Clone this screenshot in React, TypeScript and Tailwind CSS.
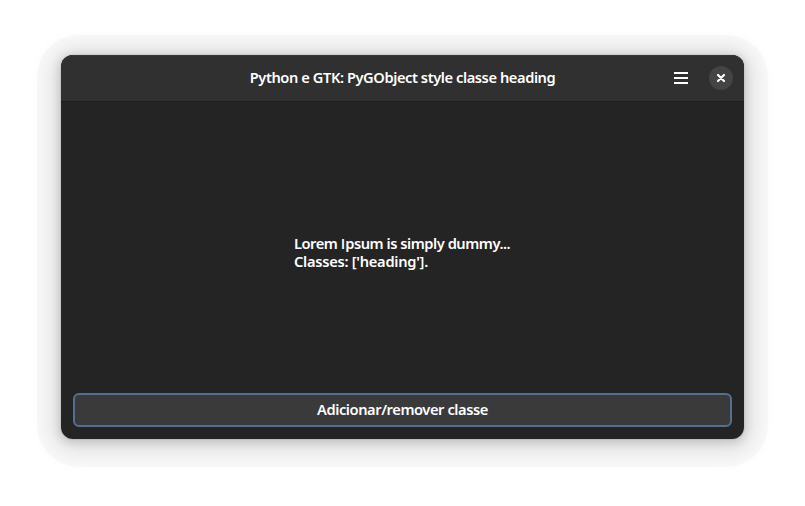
export default function App() {
  return (
    <div className="flex h-[506px] w-[805px] items-start overflow-hidden bg-white px-[61px] pt-[55px] font-['Noto_Sans',sans-serif] text-white">
      <div className="rounded-[18px] shadow-[0_4px_0_24px_rgba(0,0,0,0.025)]">
        <main className="flex h-[384px] w-[683px] flex-col rounded-xl bg-[#242424] shadow-[0_2px_8px_2px_rgba(0,0,0,0.13),0_3px_22px_9px_rgba(0,0,0,0.11),0_0_0_1px_rgba(0,0,0,0.05)]">
          <header className="grid h-[47px] shrink-0 grid-cols-[1fr_auto_1fr] items-center rounded-t-xl border-b border-[#1e1e1e] bg-[#303030] px-[11px] shadow-[inset_0_1px_0_#373737]">
            <span />
            <h1 className="whitespace-nowrap pb-0.5 text-[14.67px] font-semibold leading-5 tracking-[-0.43px]">
              Python e GTK: PyGObject style classe heading
            </h1>
            <div className="flex items-center justify-end gap-5">
              <button aria-label="Menu">
                <svg className="block" width="16" height="16" viewBox="0 0 16 16" fill="white"><path d="M1 2h14v2H1zM1 7h14v2H1zM1 12h14v2H1z" /></svg>
              </button>
              <button aria-label="Fechar" className="flex size-6 items-center justify-center rounded-full bg-[#444]">
                <svg width="16" height="16" viewBox="0 0 16 16" stroke="white" strokeWidth="2.2" strokeLinecap="round"><path d="m5 5 6 6M11 5l-6 6" /></svg>
              </button>
            </div>
          </header>
          <section className="flex flex-1 flex-col p-3">
            <div className="flex flex-1 items-center justify-center pb-[3px]">
              <div className="flex w-[217px] flex-col whitespace-nowrap text-[14.67px] font-semibold leading-[18px]">
                <p className="flex h-[18px] tracking-[-0.47px]">
                  <span className="whitespace-pre">Lorem </span>
                  <span className="mr-[0.5px] font-['Open_Sans',sans-serif]">I</span>
                  <span>psum is simply dummy...</span>
                </p>
                <p className="h-[18px] tracking-[-0.27px]">Classes: ['heading'].</p>
              </div>
            </div>
            <button className="h-[34px] rounded-md border-2 border-[#55708f] bg-[#3a3a3a] pb-0.5 text-[14.67px] font-semibold leading-5 tracking-[-0.43px]">
              Adicionar/remover classe
            </button>
          </section>
        </main>
      </div>
    </div>
  );
}
